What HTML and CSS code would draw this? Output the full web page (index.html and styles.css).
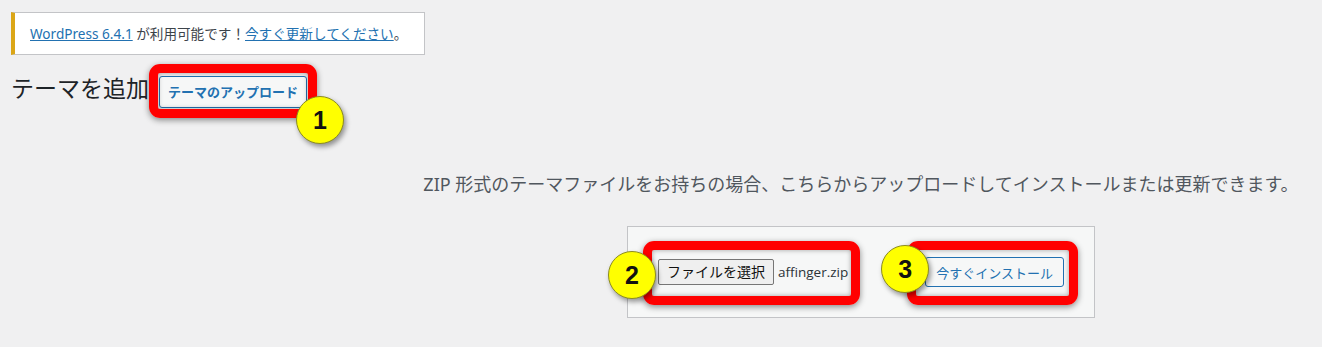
FILE: index.html
```html
<!DOCTYPE html>
<html lang="ja">
<head>
    <meta charset="UTF-8">
    <meta name="viewport" content="width=device-width, initial-scale=1.0">
    <title>テーマを追加</title>
    <link rel="stylesheet" href="styles.css">
</head>
<body>
    <div class="wrap">
        <div class="notice">
            <a href="#">WordPress 6.4.1</a> が利用可能です！<a href="#">今すぐ更新してください</a>。
        </div>

        <div class="title-row">
            <h1>テーマを追加</h1>
            <span class="mark mark-1">
                <a class="title-action" href="#">テーマのアップロード</a>
                <span class="badge">1</span>
            </span>
        </div>

        <div class="upload-theme">
            <p class="install-help">ZIP 形式のテーマファイルをお持ちの場合、こちらからアップロードしてインストールまたは更新できます。</p>
            <form class="upload-form">
                <span class="mark mark-2">
                    <span class="file-field">
                        <span class="file-button">ファイルを選択</span>
                        <span class="file-name">affinger.zip</span>
                    </span>
                    <span class="badge">2</span>
                </span>
                <span class="mark mark-3">
                    <button type="button" class="button">今すぐインストール</button>
                    <span class="badge">3</span>
                </span>
            </form>
        </div>
    </div>
</body>
</html>
```

FILE: styles.css
```css
body {
    margin: 0;
    background-color: #f0f0f1;
    color: #3c434a;
    font-family: "Noto Sans", "Noto Sans CJK JP", sans-serif;
    font-size: 13px;
    overflow: hidden;
}
a {
    color: #2271b1;
}
.wrap {
    padding: 12px 0 0 11px;
}

/* 更新のお知らせ */
.notice {
    width: 394px;
    padding: 11px 0 11px 15px;
    font-size: 13.6px;
    line-height: 19px;
    white-space: nowrap;
    background-color: #fff;
    border: 1px solid #c3c4c7;
    border-left: 4px solid #dba617;
}

/* 見出し */
.title-row {
    display: flex;
    align-items: flex-start;
    margin-top: 18px;
}
h1 {
    margin: 0 10px 0 0;
    font-size: 23px;
    font-weight: 400;
    line-height: 30px;
    color: #1d2327;
}
.title-action {
    display: inline-block;
    margin-top: 3px;
    padding: 0 8px;
    line-height: 30px;
    font-weight: 600;
    text-decoration: none;
    background-color: #f6f7f7;
    border: 1px solid #2271b1;
    border-radius: 3px;
}

/* アップロード */
.upload-theme {
    width: 922px;
    margin-left: 389px;
    text-align: center;
}
.install-help {
    margin: 63px 0 0;
    font-size: 18px;
    line-height: 27px;
    color: #50575e;
}
.upload-form {
    display: inline-flex;
    align-items: center;
    margin-top: 28px;
    padding: 30px;
    background-color: #f6f7f7;
    border: 1px solid #c3c4c7;
}
.file-field {
    display: flex;
    align-items: center;
    white-space: nowrap;
    color: #2c3338;
}
.file-button {
    flex: none;
    padding: 0 8px;
    line-height: 24px;
    font-size: 14px;
    background-color: #efefef;
    border: 1px solid #767676;
    border-radius: 2px;
    color: #111;
}
.file-name {
    margin-left: 4px;
    font-family: "Open Sans", "Noto Sans", sans-serif;
    font-size: 13.5px;
}
.button {
    display: block;
    padding: 0 10px;
    height: 30px;
    font-family: inherit;
    font-size: 13px;
    color: #2271b1;
    background-color: #f6f7f7;
    border: 1px solid #2271b1;
    border-radius: 3px;
    white-space: nowrap;
}

/* 赤枠と番号 */
.mark {
    position: relative;
    display: inline-block;
    flex: none;
}
.mark::before {
    content: "";
    position: absolute;
    border: 9px solid #ff0000;
    border-radius: 11px;
    box-shadow: 0 2px 6px rgba(0, 0, 0, 0.45), inset 0 0 5px rgba(0, 0, 0, 0.35);
    pointer-events: none;
}
.mark-1::before {
    top: -9px;
    bottom: -10px;
    left: -10px;
    right: -10px;
}
.mark-2::before {
    top: -18px;
    bottom: -20px;
    left: -15px;
    right: -12px;
}
.mark-3 {
    margin-left: 77px;
}
.mark-3::before {
    top: -16px;
    bottom: -18px;
    left: -18px;
    right: -14px;
}
.badge {
    position: absolute;
    z-index: 1;
    width: 46px;
    height: 46px;
    line-height: 46px;
    text-align: center;
    font-family: "Liberation Sans", Arial, sans-serif;
    font-size: 25px;
    font-weight: bold;
    color: #111;
    background-color: #ffff00;
    border: 1px solid #8c8c20;
    border-radius: 50%;
    box-shadow: 2px 3px 5px rgba(0, 0, 0, 0.4);
}
.mark-1 .badge {
    left: 137px;
    top: 23px;
}
.mark-2 .badge {
    left: -50px;
    top: -8px;
}
.mark-3 .badge {
    left: -44px;
    top: -12px;
}
```
